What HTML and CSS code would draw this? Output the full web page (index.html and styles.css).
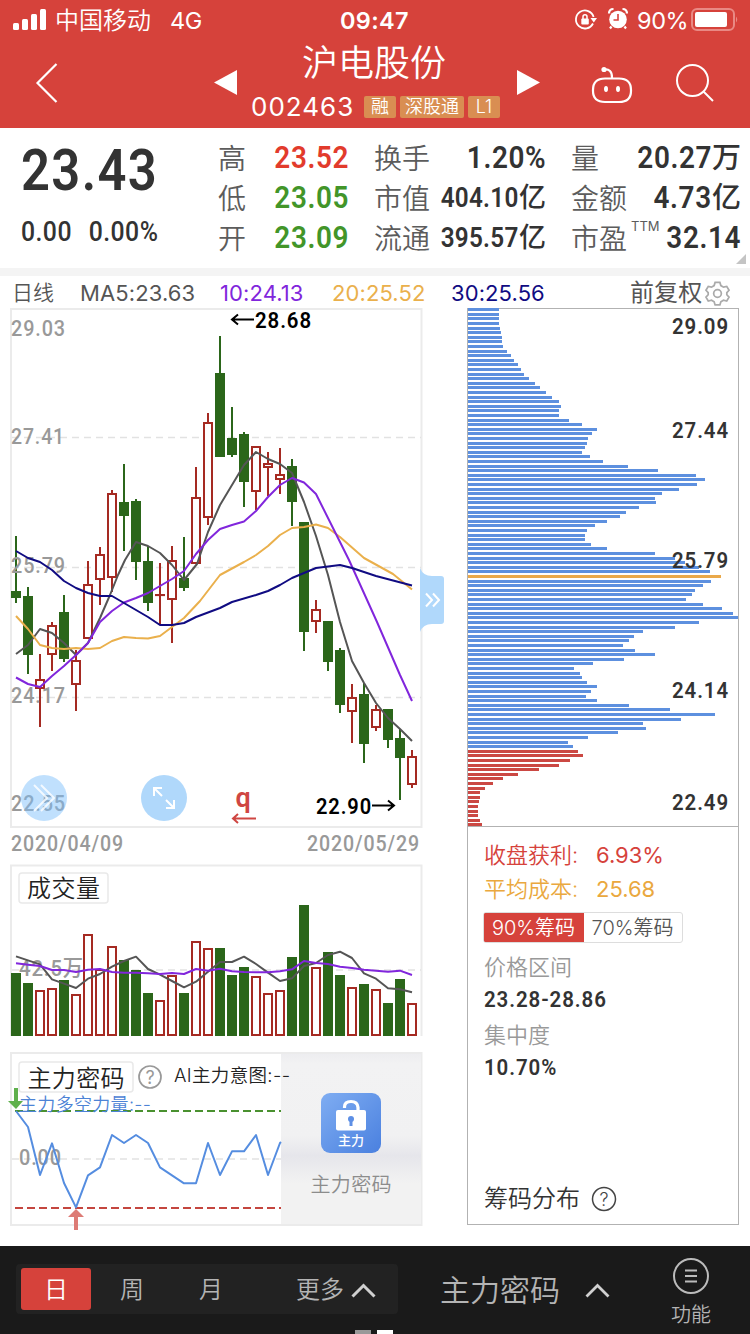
FILE: index.html
```html
<!DOCTYPE html>
<html lang="zh-CN">
<head>
<meta charset="utf-8">
<title>沪电股份 002463</title>
<link rel="stylesheet" href="styles.css">
</head>
<body>
<header class="top">
  <div class="status">
    <svg class="signal" width="34" height="22" viewBox="0 0 34 22" fill="#fff"><rect x="0" y="14" width="6" height="7" rx="1.5"/><rect x="9" y="10" width="6" height="11" rx="1.5"/><rect x="18" y="5" width="6" height="16" rx="1.5"/><rect x="27" y="0" width="6" height="21" rx="1.5"/></svg>
    <span class="carrier">中国移动</span>
    <span class="network">4G</span>
    <span class="clock">09:47</span>
    <svg class="lock" width="22" height="22" viewBox="0 0 22 22" fill="none" stroke="#fff" stroke-width="1.8"><path d="M18 14.5A9 9 0 1 1 18.6 8"/><path d="M15.5 9h6.500l-3.200 4.500z" fill="#fff" stroke="none"/><rect x="6.300" y="9.500" width="7.500" height="6" rx="1" fill="#fff" stroke="none"/><path d="M8 10V7.800a2 2 0 0 1 4 0V10" stroke-width="1.500"/></svg>
    <svg class="alarm" width="20" height="22" viewBox="0 0 20 22"><circle cx="10" cy="11.500" r="8.800" fill="#fff"/><path d="M1 5.500Q1 1 5.500 1M19 5.500Q19 1 14.500 1M3.500 18.500L2 20.500M16.500 18.500L18 20.500" stroke="#fff" stroke-width="2.200" fill="none"/><path d="M10 6v6H5.500" stroke="#d6423b" stroke-width="1.600" fill="none"/></svg>
    <span class="percent">90%</span>
    <svg class="battery" width="48" height="24" viewBox="0 0 48 24"><rect x="1" y="1" width="42" height="21" rx="5" fill="none" stroke="#e98984" stroke-width="2"/><rect x="4" y="4" width="32" height="15" rx="2" fill="#fff"/><path d="M45 8.500q2.500 3 0 6z" fill="#e98984"/></svg>
  </div>
  <nav class="nav">
    <svg class="back" width="22" height="40" viewBox="0 0 22 40"><path d="M20.500 1L1.500 20l19 19" fill="none" stroke="#fff" stroke-width="2.200"/></svg>
    <svg class="prev" width="23" height="25" viewBox="0 0 23 25"><path d="M0 12.500L23 0v25z" fill="#fff"/></svg>
    <div class="title">
      <h1>沪电股份</h1>
      <div class="code"><span class="num">002463</span><i class="tag">融</i><i class="tag tag-wide">深股通</i><i class="tag">L1</i></div>
    </div>
    <svg class="next" width="23" height="25" viewBox="0 0 23 25"><path d="M23 12.500L0 0v25z" fill="#fff"/></svg>
    <svg class="robot" width="42" height="38" viewBox="0 0 42 38"><path d="M13 3.500q8-1 8 8M14 12.500h14q12 0 12 11.500v1q0 11-12 11H14Q2 36 2 25v-1q0-11.500 12-11.500z" fill="none" stroke="#fff" stroke-width="2.200"/><circle cx="13" cy="3.500" r="2.600" fill="#fff"/><ellipse cx="15" cy="23" rx="2" ry="3" fill="#fff"/><ellipse cx="27" cy="23" rx="2" ry="3" fill="#fff"/></svg>
    <svg class="search" width="38" height="38" viewBox="0 0 38 38" fill="none" stroke="#fff" stroke-width="2"><circle cx="16.500" cy="16.500" r="15.500"/><path d="M27.500 27.500l9.500 9.500"/></svg>
  </nav>
</header>

<section class="quote">
  <div class="price">
    <div class="last">23.43</div>
    <div class="change"><span>0.00</span><span>0.00%</span></div>
  </div>
  <dl class="stats">
    <div><dt>高</dt><dd class="up"><span>23.52</span></dd></div>
    <div><dt>换手</dt><dd><span>1.20%</span></dd></div>
    <div><dt>量</dt><dd><span>20.27</span><b>万</b></dd></div>
    <div><dt>低</dt><dd class="down"><span>23.05</span></dd></div>
    <div><dt>市值</dt><dd class="small"><span>404.10</span><b>亿</b></dd></div>
    <div><dt>金额</dt><dd><span>4.73</span><b>亿</b></dd></div>
    <div><dt>开</dt><dd class="down"><span>23.09</span></dd></div>
    <div><dt>流通</dt><dd class="small"><span>395.57</span><b>亿</b></dd></div>
    <div><dt>市盈<sup>TTM</sup></dt><dd><span>32.14</span></dd></div>
  </dl>
  <svg class="corner" width="10" height="10"><path d="M10 0v10H0z" fill="#c4c4c4"/></svg>
</section>

<main class="board">
  <div class="legend">
    <span class="period">日线</span><span>MA5:23.63</span><span class="ma10">10:24.13</span><span class="ma20">20:25.52</span><span class="ma30">30:25.56</span>
    <span class="adjust">前复权</span>
    <svg width="25" height="25" viewBox="0 0 26 26" fill="none" stroke="#aaa" stroke-width="1.800"><circle cx="13" cy="13" r="4"/><path d="M10.500 1.500h5l1 3.300 2.700 1.600 3.400-.8 2.400 4-2.300 2.500v2.200l2.300 2.500-2.400 4-3.400-.8-2.700 1.600-1 3.300h-5l-1-3.300-2.700-1.600-3.400.8-2.400-4 2.300-2.500v-2.200L1 9.600l2.400-4 3.400.8 2.700-1.600z"/></svg>
  </div>
  <div class="columns">
    <div class="charts">
      <svg class="kline" width="460" height="556" viewBox="0 308 460 556">
        <path class="frame" d="M11 309H421.500V827H11z"/>
        <path class="grid" d="M12 437.500H421M12 567.500H421M12 697.500H421"/>
        <g id="candles"></g>
        <g class="axis">
          <text x="11" y="336" textLength="55" lengthAdjust="spacingAndGlyphs">29.03</text>
          <text x="11" y="444" textLength="54" lengthAdjust="spacingAndGlyphs">27.41</text>
          <text x="11" y="573" textLength="55" lengthAdjust="spacingAndGlyphs">25.79</text>
          <text x="11" y="703" textLength="55" lengthAdjust="spacingAndGlyphs">24.17</text>
          <text x="11" y="811" textLength="55" lengthAdjust="spacingAndGlyphs">22.55</text>
          <text x="11" y="851" textLength="113" lengthAdjust="spacingAndGlyphs">2020/04/09</text>
          <text x="307" y="851" textLength="113" lengthAdjust="spacingAndGlyphs">2020/05/29</text>
        </g>
        <g id="averages"></g>
        <g class="mark"><text x="255" y="328" textLength="57" lengthAdjust="spacingAndGlyphs">28.68</text><text x="316" y="814" textLength="56" lengthAdjust="spacingAndGlyphs">22.90</text><path d="M254 319.500H232M238 314.500l-6 5 6 5M372 805.500h22M388 800.500l6 5-6 5"/></g>
        <text class="q" x="235.500" y="807">q</text><path class="qline" d="M256 818.500H233M238 814l-5 4.500 5 4.500"/>
        <circle cx="44" cy="798" r="23" fill="#7bbefb" opacity=".48"/>
        <path class="glyph" d="M34 785l13 13-13 13M41 785l13 13-13 13" stroke-width="1.600" opacity=".8"/>
        <circle cx="164" cy="798" r="23" fill="#b0d8fb"/>
        <path class="glyph" d="M154 796v-8h8M154 788l8 8M174 800v8h-8M174 808l-8-8"/>
        <path d="M420 568q3 8 12 8h9q3 0 3 3v42q0 3-3 3h-9q-9 0-12 8z" fill="#b0d8fb"/>
        <path class="glyph" d="M426 593.500l6 6.500-6 6.500M433 593.500l6 6.500-6 6.500"/>
      </svg>
      <svg class="volume" width="460" height="188" viewBox="0 864 460 188">
        <path class="frame" d="M11 1036V865.500H421.500V1036"/>
        <path class="grid" d="M12 970H421"/>
        <g id="volumes"></g>
        <text class="axis" x="19" y="976" textLength="65" lengthAdjust="spacingAndGlyphs">42.5万</text>
        <g id="volume-averages"></g>
        <rect class="chip" x="19" y="873" width="89" height="30" rx="3"/>
        <text class="name" x="27" y="897" textLength="73">成交量</text>
      </svg>
      <svg class="force" width="460" height="194" viewBox="0 1052 460 194">
        <defs>
          <linearGradient id="blue" x1="0" y1="0" x2="1" y2="1"><stop offset="0" stop-color="#7fadf2"/><stop offset="1" stop-color="#4a80df"/></linearGradient>
          <linearGradient id="veil" x1="0" y1="0" x2="0" y2="1"><stop offset="0" stop-color="#ededf0"/><stop offset=".06" stop-color="#f2f2f3"/><stop offset=".48" stop-color="#f1f1f2"/><stop offset=".6" stop-color="#e6e6eb"/><stop offset=".76" stop-color="#f2f2f2"/><stop offset="1" stop-color="#f2f2f2"/></linearGradient>
        </defs>
        <path class="frame" d="M11 1053H421.500V1225H11z"/>
        <path class="grid" d="M12 1159H281"/>
        <path d="M15 1111H281" stroke="#4a9130" stroke-width="2" stroke-dasharray="8 4"/>
        <path d="M15 1208H281" stroke="#c4463f" stroke-width="2" stroke-dasharray="8 4"/>
        <rect x="281" y="1054" width="140" height="170" fill="url(#veil)"/>
        <text class="axis" x="19" y="1165" textLength="43" lengthAdjust="spacingAndGlyphs">0.00</text>
        <g id="force-line"></g>
        <rect class="chip" x="19" y="1062" width="114" height="30" rx="3"/>
        <text class="name" x="27.500" y="1086.500" textLength="97">主力密码</text>
        <circle cx="150" cy="1077" r="11" fill="none" stroke="#999" stroke-width="1.700"/>
        <text class="help" x="150" y="1084">?</text>
        <text class="intent" x="174" y="1082" textLength="116">AI主力意图:--</text>
        <text class="power" x="19" y="1110.500" textLength="132">主力多空力量:--</text>
        <path d="M14 1088h4v13h5l-7 8-8-8h6z" fill="#5fb04c"/>
        <path d="M74 1230h4v-13h6l-8-8-8 8h6z" fill="#dd7b75"/>
        <rect x="321" y="1093" width="60" height="60" rx="9" fill="url(#blue)"/>
        <rect x="336" y="1110" width="30" height="20.500" rx="2" fill="#fff"/>
        <path d="M344.500 1108v-1q0-5.500 6.500-5.500t7 6v3" fill="none" stroke="#fff" stroke-width="3.200"/>
        <circle cx="351" cy="1119" r="3" fill="#5d8fe5"/><path d="M349.500 1119h3v7h-3z" fill="#5d8fe5"/>
        <text class="badge" x="351" y="1144.500">主力</text>
        <text class="locked" x="310.500" y="1192" textLength="81">主力密码</text>
      </svg>
    </div>
    <aside class="cost">
      <svg class="distribution" width="270" height="517" viewBox="468 309 270 517">
        <g id="chips"></g>
        <g class="levels">
          <text x="672" y="334" textLength="57" lengthAdjust="spacingAndGlyphs">29.09</text>
          <text x="672" y="438" textLength="57" lengthAdjust="spacingAndGlyphs">27.44</text>
          <text x="672" y="568" textLength="57" lengthAdjust="spacingAndGlyphs">25.79</text>
          <text x="672" y="698" textLength="57" lengthAdjust="spacingAndGlyphs">24.14</text>
          <text x="672" y="810" textLength="57" lengthAdjust="spacingAndGlyphs">22.49</text>
        </g>
      </svg>
      <div class="detail">
        <p class="profit"><span>收盘获利:</span><em>6.93%</em></p>
        <p class="average"><span>平均成本:</span><em>25.68</em></p>
        <div class="tabs"><span class="active">90%筹码</span><span>70%筹码</span></div>
        <p class="label">价格区间</p>
        <p class="value"><b>23.28-28.86</b></p>
        <p class="label second">集中度</p>
        <p class="value"><b>10.70%</b></p>
        <p class="caption">筹码分布<svg width="26" height="26" viewBox="0 0 26 26"><circle cx="13" cy="13" r="11.500" fill="none" stroke="#444" stroke-width="1.500"/><text class="help dark" x="13" y="19.500">?</text></svg></p>
      </div>
    </aside>
  </div>
</main>

<footer class="bar">
  <div class="periods"><span class="on">日</span><span>周</span><span>月</span><span class="more">更多<svg width="25" height="15" viewBox="0 0 25 15"><path d="M1.500 13.500l11-11 11 11" fill="none" stroke="#d0d0d0" stroke-width="3"/></svg></span></div>
  <div class="indicator">主力密码<svg width="25" height="15" viewBox="0 0 25 15"><path d="M1.500 13.500l11-11 11 11" fill="none" stroke="#d0d0d0" stroke-width="2.800"/></svg></div>
  <div class="menu"><svg width="38" height="38" viewBox="0 0 38 38" fill="none" stroke="#bbb" stroke-width="2"><circle cx="19" cy="19" r="17"/><path d="M13 13.500h12M13 19h12M13 24.500h12"/></svg><span>功能</span></div>
  <div class="pager"><i></i><i class="current"></i></div>
</footer>
<script src="chart.js"></script>
</body>
</html>
```
FILE: styles.css
```css
* { box-sizing: border-box; }
body { margin: 0; width: 750px; height: 1334px; overflow: hidden; background: #fff; color: #333; font-family: Inter, "Noto Sans CJK SC", sans-serif; }
h1, p, dl, dd { margin: 0; }
svg { display: block; flex: none; overflow: visible; }
i, em { font-style: normal; }
.top { height: 128px; background: #d6423b; color: #fff; }
.status { height: 40px; display: flex; align-items: center; font-size: 23.500px; white-space: nowrap; }
.signal { margin: 0 8px 0 13px; }
.carrier { width: 97px; font-size: 24px; line-height: 36px; margin-top: 1px; font-weight: 350; }
.network { width: 32px; margin-left: 18px; letter-spacing: -.5px; }
.clock { width: 70px; margin-left: 138px; font-weight: 600; letter-spacing: .3px; }
.lock { margin-left: 165px; }
.alarm { margin-left: 11px; margin-top: -2px; }
.percent { width: 51px; margin-left: 9px; letter-spacing: -.4px; }
.battery { margin-left: 3px; }
.nav { height: 88px; display: flex; }
.nav > svg { margin-top: 30px; }
.nav .back { margin: 23px 0 0 36px; }
.nav .prev { margin-left: 156px; }
.title { width: 250px; margin-left: 14px; }
.nav .next { margin-left: 16px; }
.nav .robot { margin: 26px 0 0 51px; }
.nav .search { margin: 24px 0 0 43px; }
.title h1 { margin-left: -4px; padding-top: 1px; font-size: 36px; line-height: 44px; font-weight: 350; text-align: center; }
.code { display: flex; align-items: center; height: 43px; gap: 4px; }
.code .num { width: 109px; font-size: 26px; letter-spacing: 1px; }
.tag { width: 32px; height: 22px; border-radius: 2px; background: #d98e52; font-size: 18px; line-height: 22px; text-align: center; font-weight: 350; }
.tag-wide { width: 64px; }
.quote { position: relative; height: 148px; display: flex; border-bottom: 8px solid #f4f4f4; }
.price { width: 218px; padding-left: 21px; font-family: Roboto, sans-serif; }
.last { margin-top: 15px; font-size: 57px; line-height: 56px; font-weight: 600; letter-spacing: 1.500px; transform: scaleX(.89); transform-origin: left; }
.change { display: flex; gap: 19px; margin-top: 16px; font-size: 28px; line-height: 34px; font-weight: 500; letter-spacing: .5px; transform: scaleX(.885); transform-origin: left; }
.stats { width: 524px; padding-top: 11px; display: grid; grid-template-columns: 131px 172px 170px; column-gap: 25px; grid-template-rows: repeat(3, 40px); }
.stats > div { display: flex; justify-content: space-between; align-items: center; white-space: nowrap; line-height: 40px; }
dt { position: relative; font-size: 28px; font-weight: 350; color: #5c5c5c; }
dd { height: 42px; display: flex; justify-content: flex-end; width: 90px; font-family: Roboto, "Noto Sans CJK SC", sans-serif; font-size: 31px; font-weight: 600; letter-spacing: .7px; }
dd span { transform: scaleX(.9); transform-origin: right; }
dd b { font-weight: 500; font-size: 29px; letter-spacing: 0; }
dd.small { font-size: 27px; letter-spacing: .3px; }
dd.small b { font-size: 27px; }
.up { color: #e23b2c; }
.down { color: #429529; }
dt sup { position: absolute; left: 60px; top: 1px; font-size: 13px; line-height: 13px; letter-spacing: 0; font-weight: 400; }
.corner { position: absolute; right: 4px; bottom: 4px; }
.board { height: 970px; }
.legend { height: 32px; display: grid; grid-template-columns: 68px 140px 112px 119px 179px 75px auto; padding: 2px 0 0 12px; align-items: center; font-size: 22px; line-height: 30px; color: #555; white-space: nowrap; letter-spacing: .1px; }
.period { font-size: 21px; font-weight: 350; }
.adjust { font-size: 24px; }
.ma10 { color: #8126dc; }
.ma20 { color: #eab04c; }
.ma30 { color: #100b82; }
.columns { display: flex; }
.charts { width: 467px; }
.frame { fill: none; stroke: #ebebeb; stroke-width: 2; }
.grid { fill: none; stroke: #e2e2e2; stroke-width: 1.500; stroke-dasharray: 7 5; }
.axis, .mark, .levels { font: 600 22.500px Roboto, "Noto Sans CJK SC", sans-serif; letter-spacing: 1px; }
.axis { fill: #999; font-weight: 500; }
.mark { fill: #000; }
.levels { fill: #333; }
.mark path { fill: none; stroke: #000; stroke-width: 2; }
.q { font: 600 27px Roboto, sans-serif; fill: #cf4642; }
.qline { fill: none; stroke: #cf4642; stroke-width: 2; }
.glyph { fill: none; stroke: #fff; stroke-width: 2; }
.chip { fill: #fff; stroke: #e9e9e9; stroke-width: 1.500; }
.name { font-size: 24px; font-weight: 350; fill: #222; }
.help { font-size: 18px; fill: #999; text-anchor: middle; }
.help.dark { fill: #444; }
.intent { font-size: 18.500px; font-weight: 350; fill: #222; }
.power { font-size: 18px; font-weight: 350; fill: #4d83d6; }
.badge { font-size: 13px; font-weight: 500; fill: #fff; text-anchor: middle; }
.locked { font-size: 20px; font-weight: 350; fill: #8c8c8c; }
.curve { fill: none; stroke-width: 2; stroke-linejoin: round; }
.cost { width: 272px; height: 917px; border: 1px solid #b2b2b2; }
.detail { height: 399px; border-top: 1px solid #b2b2b2; padding: 11px 0 0 16px; font-size: 22px; display: flex; flex-direction: column; }
.detail p { line-height: 34px; white-space: nowrap; }
.detail p span { display: inline-block; width: 112px; font-weight: 350; }
.profit { color: #d6423b; }
.average { color: #eaa83e; }
.tabs { display: flex; width: 200px; height: 31px; margin: 6px 0 7px -1px; border: 1px solid #ddd; border-radius: 3px; font-size: 20px; line-height: 31px; font-weight: 350; color: #555; overflow: hidden; flex: none; }
.tabs span { flex: 1; text-align: center; }
.tabs .active { background: #d6423b; color: #fff; box-shadow: 0 0 0 1px #d6423b; }
.detail .label { color: #999; line-height: 35px; height: 33px; font-weight: 350; }
.detail .second { margin-top: 2px; }
.detail .value { font-family: Roboto, sans-serif; line-height: 33px; font-size: 22.500px; letter-spacing: 1px; }
.value b { display: inline-block; font-weight: 600; transform: scaleX(.91); transform-origin: left; }
.detail .caption { display: flex; align-items: center; gap: 11px; margin-top: 98px; font-size: 24px; font-weight: 350; }
.bar { position: relative; height: 88px; background: #1a1a1a; display: flex; color: #b4b4b4; font-weight: 350; white-space: nowrap; }
.periods { width: 382px; height: 50px; margin: 18px 0 0 16px; padding: 4px 5px; border-radius: 4px; background: #222; display: grid; grid-template-columns: 70px 82px 76px 144px; font-size: 24px; line-height: 44px; text-align: center; }
.periods .on { background: #d6423b; border-radius: 3px; color: #fff; height: 42px; }
.periods .more { display: flex; align-items: center; justify-content: flex-end; gap: 7px; padding-right: 17px; }
.indicator { width: 170px; margin-left: 42px; display: flex; align-items: center; justify-content: space-between; font-size: 30px; line-height: 88px; }
.menu { width: 60px; margin: 11px 0 0 51px; display: flex; flex-direction: column; align-items: center; font-size: 20px; line-height: 40px; }
.pager { position: absolute; left: 355px; bottom: 0; display: flex; gap: 6px; }
.pager i { width: 16px; height: 4px; background: #999; }
.pager .current { background: #fff; }
```
FILE: chart.js
```js
const GREEN = '#2b661a', RED = '#a52a22';
const x = i => 16 + 12 * i;
const put = (id, html) => { document.getElementById(id).innerHTML = html; };
const curve = (points, color) => `<polyline class="curve" stroke="${color}" points="${points.map(p => p.join()).join(' ')}"/>`;
const series = ys => ys.map((y, i) => [x(i), y]);
const box = (cx, top, bottom, up) => up
  ? `<rect x="${cx - 4}" y="${top + 1}" width="8" height="${Math.max(bottom - top - 2, .1)}" fill="#fff" stroke="${RED}" stroke-width="2"/>`
  : `<rect x="${cx - 5}" y="${top}" width="10" height="${bottom - top}" fill="${GREEN}"/>`;

// [rising, high, body top, body bottom, low]
const candles = [
  [0,536,591,598,603],[0,587,596,655,674],[1,654,679,689,727],[1,622,625,655,671],[0,595,612,659,662],
  [1,650,660,685,711],[1,561,584,639,639],[1,547,554,580,605],[1,490,493,578,592],[0,464,502,516,551],
  [0,499,501,562,580],[0,546,561,603,611],[1,563,594,596,625],[1,546,560,600,643],[0,537,578,588,591],
  [1,467,497,564,564],[1,413,422,518,525],[0,336,373,457,457],[0,407,438,455,457],[0,432,434,482,507],
  [1,446,446,492,510],[1,452,463,468,496],[1,448,474,480,494],[0,459,466,502,526],[0,522,522,632,651],
  [1,600,609,622,633],[0,621,621,662,671],[0,648,650,705,713],[1,684,697,712,743],[0,683,694,744,763],
  [1,705,709,728,731],[0,709,709,740,748],[0,729,738,758,800],[1,750,756,785,788]
];
put('candles', candles.map(([up, high, top, bottom, low], i) =>
  `<path d="M${x(i)} ${high}V${low}" stroke="${up ? RED : GREEN}" stroke-width="2"/>` + box(x(i), top, bottom, up)).join(''));

put('averages',
  curve([[16,654],[28,645],[40,629],[52,633],[64,643],[76,655],[88,643],[100,618],[110,595],[118,575],[125,560],[136,542],[148,546],[160,553],[172,565],[184,580],[197,564],[208,532],[220,505],[244,465],[256,452],[268,459],[280,464],[292,473],[304,502],[316,536],[328,575],[340,622],[352,661],[364,683],[376,703],[388,718],[400,729],[412,741]], '#555') +
  curve([[16,616],[28,629],[40,645],[52,648],[64,649],[76,648],[88,649],[100,648],[112,641],[124,637],[136,638],[148,638.5],[160,636],[172,627],[184,618],[200,601],[220,575],[244,562],[256,555],[268,546],[280,535],[292,528],[304,527],[316,524.5],[328,528],[340,537],[364,558],[393,574],[412,589.5]], '#eab04c') +
  curve([[16,677.5],[28,684],[40,687],[52,676],[64,666],[76,655],[88,643],[100,622],[112,611],[124,602.5],[136,598],[148,593],[160,586],[172,579],[184,571],[196,554],[208,540],[220,529],[232,525],[244,521.5],[256,511],[268,497],[280,485],[292,478],[304,482.5],[316,494],[349,560],[377,622],[400,675],[412,701]], '#8126dc') +
  curve([[16,551],[28,558],[40,562],[52,570],[64,581],[76,588],[88,593],[100,596],[112,596],[124,603],[148,617],[160,625],[172,625],[184,623],[196,617],[220,608],[232,602],[256,595],[268,591],[280,585],[292,578],[316,568],[340,565],[352,568],[376,576],[412,585.5]], '#100b82'));

const volumes = [973,983,990,988,980,994,934,969,946,960,970,993,1000,975,993,941,948,948,975,967,976,993,990,957,905,967,952,975,987,984,989,1003,979,1003];
put('volumes', volumes.map((top, i) => box(x(i), top, 1036, candles[i][0])).join(''));

const third = (base, values) => series(values.map(v => base + v / 3));
put('volume-averages',
  curve(third(855, [304,316,328,373,386,399,371,357,335,318,305,342,359,378,397,380,350,321,321,305,327,353,378,370,333,324,300,290,309,355,371,400,403,412]), '#555') +
  curve(third(855, [325,329,333,345,345,351,344,342,351,353,353,355,357,354,357,342,347,341,349,351,352,352,349,343,318,324,327,335,339,344,347,350,347,360]), '#8126dc'));
put('force-line', curve(third(1045, [198,246,390,295,414,487,391,367,270,294,270,294,367,391,415,415,294,390,319,319,270,390]).concat([[280,1143],[281,1142]]), '#558de0'));

// Cost distribution, highest price first; red rows lie below the closing price.
const chips = [117,117,117,117,120,123,126,126,129,141,153,162,174,183,192,207,225,240,258,276,297,303,297,297,327,366,411,396,384,381,375,366,390,429,504,594,708,735,711,657,606,585,588,537,498,480,441,405,381,375,375,393,441,585,645,675,717,750,783,753,729,705,696,678,729,786,819,834,717,645,549,522,507,489,525,585,492,399,342,360,366,381,411,393,378,411,507,630,765,663,549,558,474,384,324,339,354,369,330,297,237,174,129,99,75,60,60,57,54,54,54,60,66];
put('chips', chips.map((end, i) =>
  `<rect x="468" y="${Math.round(308.2 + 4.6 * i)}" width="${(end - 24) / 3}" height="3" fill="${i === 58 ? '#eaa94a' : i > 95 ? '#cb4843' : '#5d90df'}"/>`).join(''));
```
